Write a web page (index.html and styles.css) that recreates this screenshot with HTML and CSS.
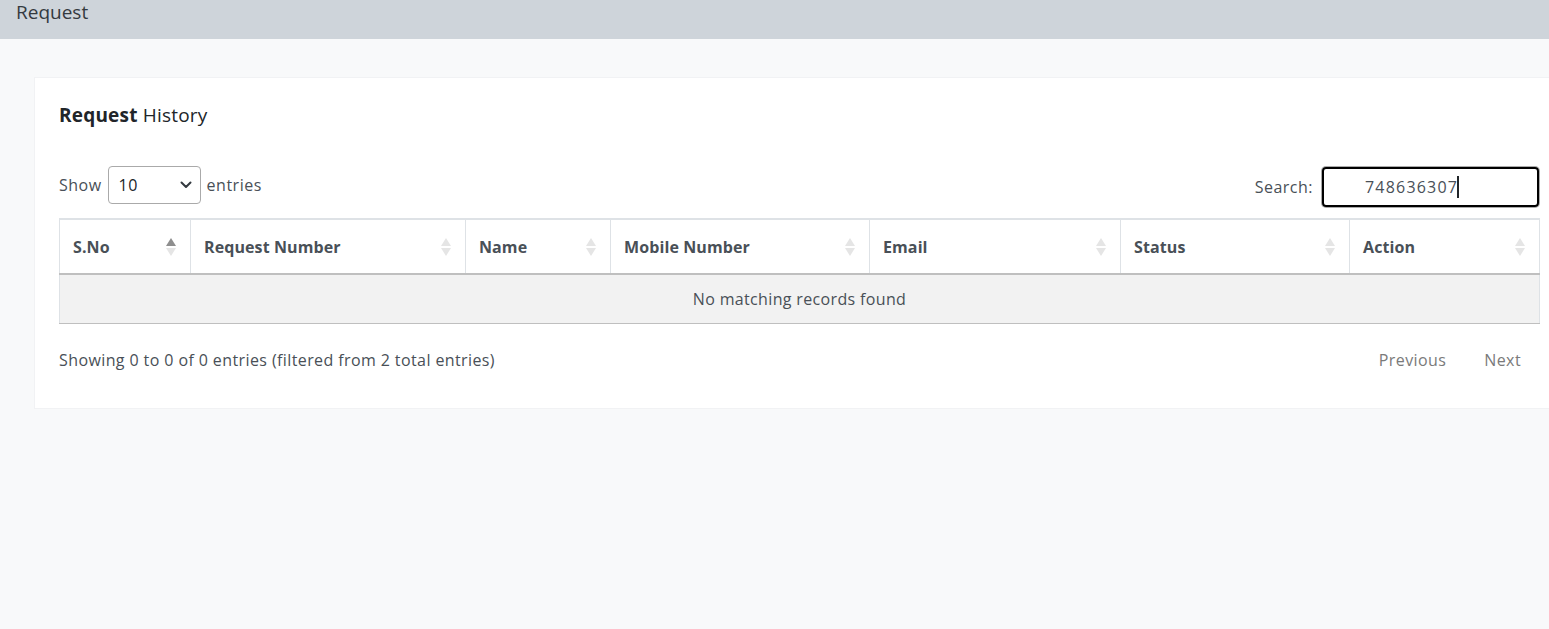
FILE: index.html
```html
<!DOCTYPE html>
<html>
<head>
<meta charset="utf-8">
<link rel="stylesheet" href="styles.css">
</head>
<body>
<div class="topbar"><span class="topbar-title">Request</span></div>
<div class="main">
  <div class="card">
    <h4 class="card-title"><b>Request</b> History</h4>
    <div class="controls">
      <label class="length">Show
        <span class="select">10
          <svg class="chev" width="12" height="8" viewBox="0 0 12 8"><path d="M1.5 1.5 L6 6 L10.5 1.5" fill="none" stroke="#343a40" stroke-width="2" stroke-linecap="round" stroke-linejoin="round"/></svg>
        </span>
        entries</label>
      <label class="search">Search: <span class="search-input">748636307<span class="caret"></span></span></label>
    </div>
    <table class="dt">
      <colgroup>
        <col style="width:131px"><col style="width:275px"><col style="width:145px"><col style="width:259px"><col style="width:251px"><col style="width:229px"><col style="width:190px">
      </colgroup>
      <thead>
        <tr>
          <th class="sorted">S.No<span class="sort"><i class="up"></i><i class="down"></i></span></th>
          <th>Request Number<span class="sort"><i class="up"></i><i class="down"></i></span></th>
          <th>Name<span class="sort"><i class="up"></i><i class="down"></i></span></th>
          <th>Mobile Number<span class="sort"><i class="up"></i><i class="down"></i></span></th>
          <th>Email<span class="sort"><i class="up"></i><i class="down"></i></span></th>
          <th>Status<span class="sort"><i class="up"></i><i class="down"></i></span></th>
          <th>Action<span class="sort"><i class="up"></i><i class="down"></i></span></th>
        </tr>
      </thead>
      <tbody>
        <tr><td colspan="7" class="empty">No matching records found</td></tr>
      </tbody>
    </table>
    <div class="footer">
      <div class="info">Showing 0 to 0 of 0 entries (filtered from 2 total entries)</div>
      <div class="paging"><span>Previous</span><span>Next</span></div>
    </div>
  </div>
</div>
</body>
</html>
```
FILE: styles.css
```css
html, body { margin: 0; padding: 0; }
body {
  background: #f8f9fa;
  font-family: "Open Sans", "Noto Sans", sans-serif;
  color: #495057;
  overflow: hidden;
  width: 1549px;
  height: 629px;
}
.topbar {
  height: 39px;
  background: #ced4da;
  display: flex;
  align-items: flex-start;
  padding-left: 16px;
}
.topbar-title {
  font-size: 19px;
  line-height: 25px;
  color: #343a40;
  font-weight: 400;
}
.main {
  padding: 38px 0 0 34px;
}
.card {
  background: #fff;
  width: 1530px;
  box-sizing: border-box;
  padding: 24px 24px 0 24px;
  height: 332px;
  border: 1px solid #f1f2f4;
}
.card-title {
  margin: 0;
  font-size: 19px;
  font-weight: 400;
  color: #212529;
  line-height: 26px;
  letter-spacing: 0.2px;
}
.card-title b { font-weight: 700; }
.controls {
  display: flex;
  justify-content: space-between;
  align-items: flex-start;
  margin-top: 38px;
  height: 52px;
  font-size: 16px;
  letter-spacing: 0.5px;
}
.length { display: flex; align-items: center; gap: 6px; height: 38px; }
.select {
  display: inline-flex;
  align-items: center;
  justify-content: space-between;
  box-sizing: border-box;
  width: 93px;
  height: 38px;
  border: 1px solid #aaa;
  border-radius: 4px;
  padding: 0 8px 0 10px;
  color: #212529;
}
.search { display: flex; align-items: center; gap: 9px; height: 40px; margin-top: 1px; }
.search-input {
  display: inline-flex;
  align-items: center;
  box-sizing: border-box;
  width: 217px;
  height: 40px;
  border: 2px solid #000;
  border-radius: 4px;
  box-shadow: 0 0 0 1px #aaa;
  padding-left: 41px;
  color: #495057;
  letter-spacing: 1.2px;
}
.caret { display: inline-block; width: 1.5px; height: 22px; background: #212529; margin-left: -1px; }
table.dt {
  border-collapse: collapse;
  table-layout: fixed;
  width: 1480px;
  font-size: 16px;
}
.dt th {
  position: relative;
  text-align: left;
  font-weight: 700;
  color: #495057;
  height: 55px;
  padding: 0 13px;
  border-top: 2px solid #dee2e6;
  border-left: 1px solid #dee2e6;
  border-bottom: 2px solid #bfbfbf;
  box-sizing: border-box;
  letter-spacing: 0.1px;
}
.dt th:last-child { border-right: 1px solid #dee2e6; }
.sort {
  position: absolute;
  right: 14px;
  top: 50%;
  transform: translateY(-50%);
  display: flex;
  flex-direction: column;
  gap: 2px;
}
.sort i { display: block; width: 0; height: 0; border-left: 5px solid transparent; border-right: 5px solid transparent; }
.sort .up { border-bottom: 8px solid #e5e5e5; }
.sort .down { border-top: 8px solid #e5e5e5; }
.sorted .sort .up { border-bottom-color: #8e8e8e; }
.dt td.empty {
  background: #f2f2f2;
  text-align: center;
  height: 48px;
  padding: 0;
  border-left: 1px solid #dee2e6;
  border-right: 1px solid #dee2e6;
  border-bottom: 1px solid #bfbfbf;
  color: #495057;
  letter-spacing: 0.35px;
}
.footer {
  display: flex;
  justify-content: space-between;
  align-items: center;
  width: 1480px;
  height: 72px;
  font-size: 16px;
  letter-spacing: 0.4px;
}
.paging { display: flex; gap: 38px; padding-right: 18px; color: #7a7a7a; }
.paging span:first-child { margin-left: -2px; }
```
